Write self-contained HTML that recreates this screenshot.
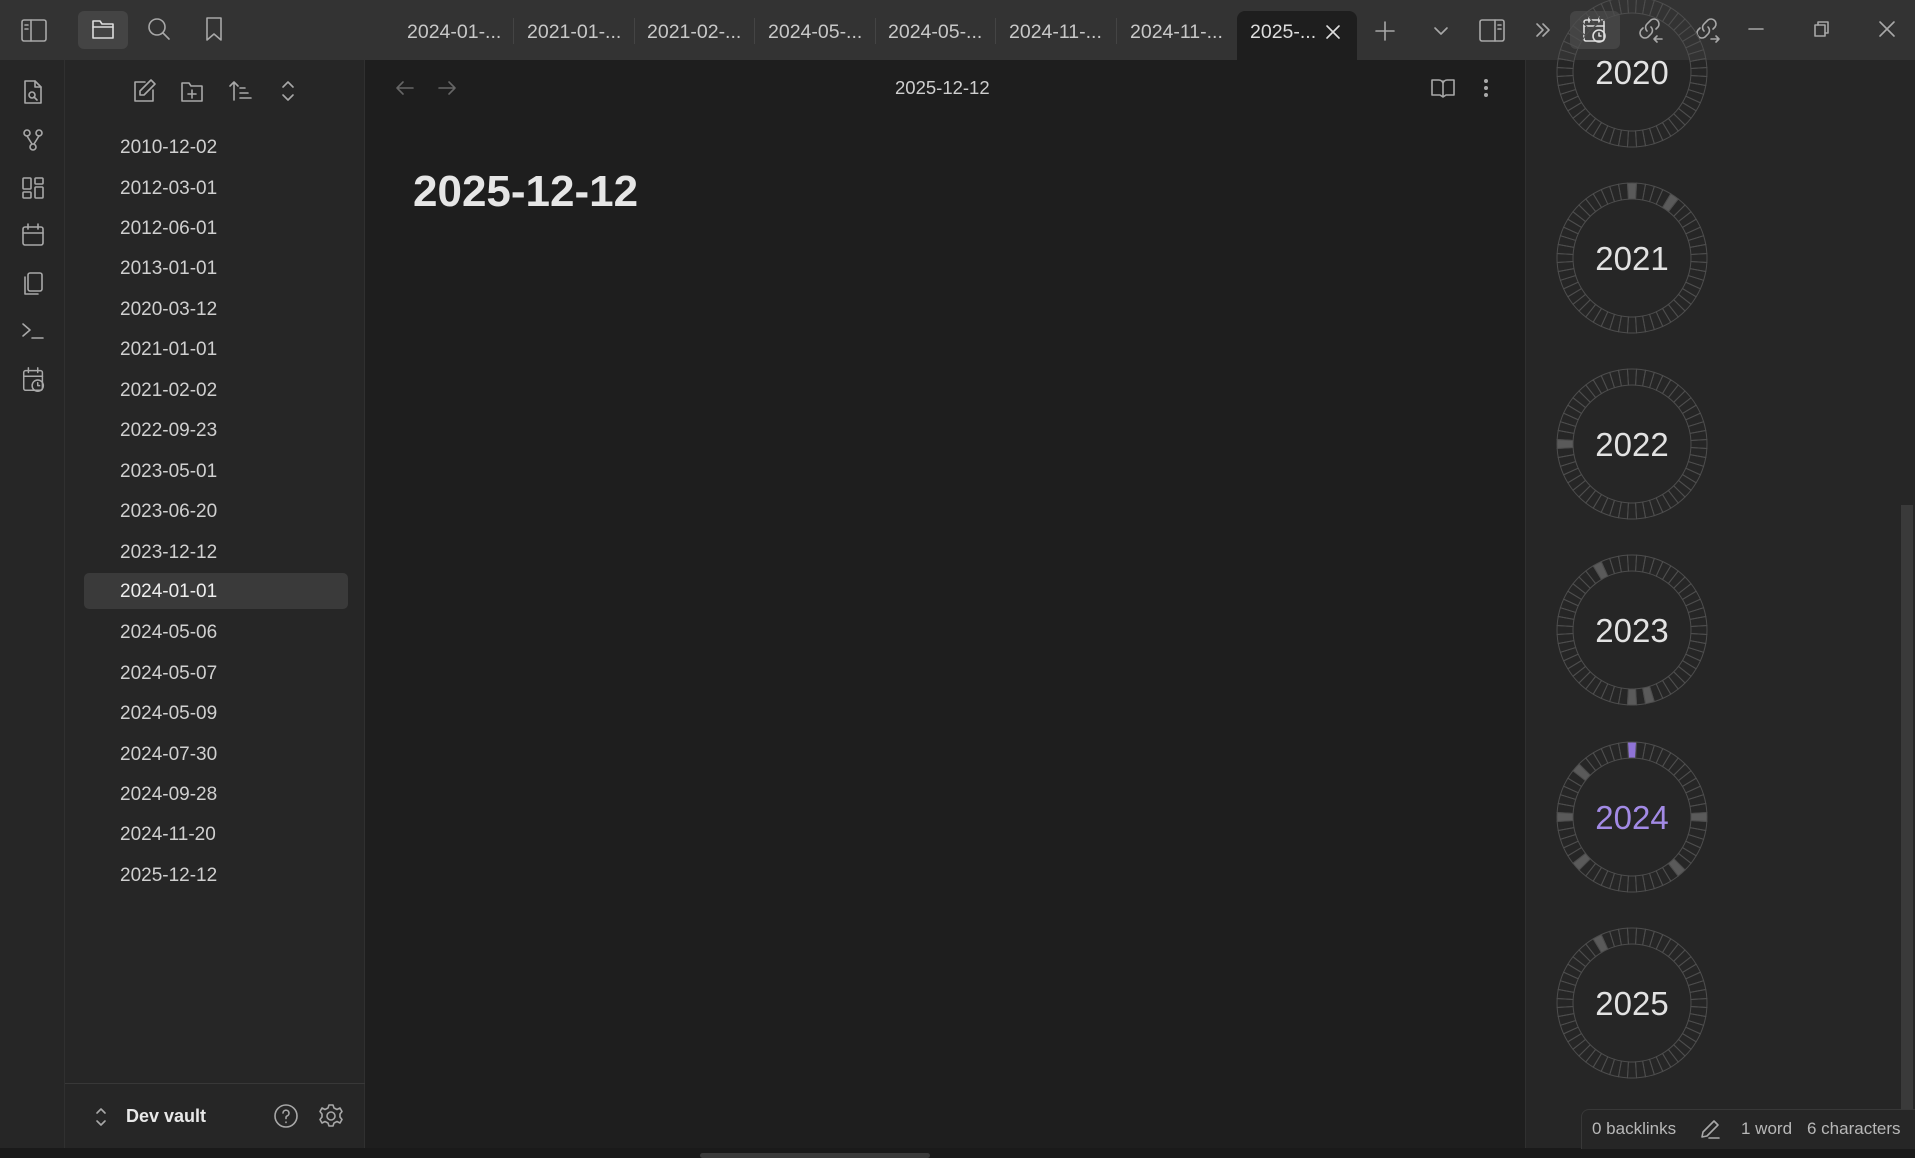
<!DOCTYPE html>
<html><head><meta charset="utf-8"><style>
*{box-sizing:border-box;margin:0;padding:0}
body{width:1915px;height:1158px;background:#1e1e1e;font-family:"Liberation Sans",sans-serif;color:#dadada;position:relative;overflow:hidden}
.top{position:absolute;left:0;top:0;width:1915px;height:60px;background:#333333}
.rib{position:absolute;left:0;top:60px;width:65px;height:1088px;background:#262626;border-right:1px solid #303030}
.side{position:absolute;left:65px;top:60px;width:300px;height:1088px;background:#262626;border-right:1px solid #303030}
.right{position:absolute;left:1525px;top:60px;width:390px;height:1088px;background:#262626;border-left:1px solid #303030}
.bot{position:absolute;left:0;top:1148px;width:1915px;height:10px;background:#1a1a1a}
.tab{position:absolute;top:21px;font-size:19.5px;color:#c8c8c8}
.sep{position:absolute;top:18px;width:1px;height:26px;background:#444}
.item{position:absolute;left:120px;font-size:19px;color:#d0d0d0}
svg.i{position:absolute;fill:none;stroke:#a8a8a8;stroke-width:1.6;stroke-linecap:round;stroke-linejoin:round}
.yr{position:absolute;left:1556px;width:152px;height:152px}
</style></head><body>
<div class="top"></div>
<div class="rib"></div>
<div class="side"></div>
<div class="right"></div>
<div style="position:absolute;left:1901px;top:505px;width:12px;height:640px;background:#3a3a3a"></div>
<div class="bot"></div>
<div style="position:absolute;left:700px;top:1153px;width:230px;height:5px;background:#3a3a3a;border-radius:3px"></div>

<div style="position:absolute;left:78px;top:11px;width:50px;height:38px;background:#444;border-radius:6px"></div>
<svg class="i" style="left:20px;top:18px" width="28" height="26" viewBox="0 0 28 26"><rect x="2" y="2" width="24" height="21" rx="2"/><line x1="11" y1="2" x2="11" y2="23"/><line x1="5" y1="7" x2="8" y2="7"/><line x1="5" y1="11" x2="8" y2="11"/></svg>
<svg class="i" style="left:90px;top:16px;stroke:#ddd" width="26" height="26" viewBox="0 0 26 26"><path d="M3 5h7l2 3h11v14H3z"/><line x1="3" y1="11" x2="23" y2="11"/></svg>
<svg class="i" style="left:146px;top:16px" width="26" height="26" viewBox="0 0 26 26"><circle cx="11" cy="11" r="8"/><line x1="17" y1="17" x2="23" y2="23"/></svg>
<svg class="i" style="left:202px;top:16px" width="24" height="26" viewBox="0 0 24 26"><path d="M5 2h14v22l-7-6-7 6z"/></svg>

<div style="position:absolute;left:1237px;top:11px;width:120px;height:50px;background:#1e1e1e;border-radius:8px 8px 0 0"></div>
<div class="tab" style="left:407px">2024-01-...</div><div class="sep" style="left:513px"></div>
<div class="tab" style="left:527px">2021-01-...</div><div class="sep" style="left:634px"></div>
<div class="tab" style="left:647px">2021-02-...</div><div class="sep" style="left:754px"></div>
<div class="tab" style="left:768px">2024-05-...</div><div class="sep" style="left:875px"></div>
<div class="tab" style="left:888px">2024-05-...</div><div class="sep" style="left:995px"></div>
<div class="tab" style="left:1009px">2024-11-...</div><div class="sep" style="left:1116px"></div>
<div class="tab" style="left:1130px">2024-11-...</div>
<div class="tab" style="left:1250px;color:#ddd">2025-...</div>
<svg class="i" style="left:1325px;top:24px;stroke:#ddd" width="16" height="16" viewBox="0 0 16 16"><path d="M2 2l12 12M14 2L2 14"/></svg>
<svg class="i" style="left:1374px;top:20px" width="22" height="22" viewBox="0 0 22 22"><path d="M11 2v18M2 11h18"/></svg>
<svg class="i" style="left:1432px;top:24px" width="18" height="14" viewBox="0 0 18 14"><path d="M3 4l6 6 6-6"/></svg>
<svg class="i" style="left:1478px;top:18px" width="28" height="26" viewBox="0 0 28 26"><rect x="2" y="2" width="24" height="21" rx="2"/><line x1="17" y1="2" x2="17" y2="23"/><line x1="20" y1="7" x2="23" y2="7"/><line x1="20" y1="11" x2="23" y2="11"/></svg>
<svg class="i" style="left:1533px;top:20px" width="20" height="20" viewBox="0 0 20 20"><path d="M4 4l6 6-6 6M10 4l6 6-6 6"/></svg>
<div style="position:absolute;left:1570px;top:11px;width:50px;height:38px;background:#444;border-radius:6px"></div>
<svg class="i" style="left:1581px;top:15px;stroke:#ddd" width="28" height="30" viewBox="0 0 28 30"><rect x="3" y="5" width="20" height="21" rx="2"/><line x1="3" y1="11" x2="23" y2="11"/><line x1="8" y1="2" x2="8" y2="7"/><line x1="18" y1="2" x2="18" y2="7"/><circle cx="18" cy="21" r="6"/><path d="M18 18v3h2"/></svg>
<svg class="i" style="left:1635px;top:15px" width="30" height="30" viewBox="0 0 30 30"><path d="M12 16a5 5 0 0 1 0-7l4-4a5 5 0 0 1 7 7l-2 2M16 12a5 5 0 0 1 0 7l-3 3a5 5 0 0 1-7-7l2-2"/><path d="M19 24h8M22 21l-3 3 3 3"/></svg>
<svg class="i" style="left:1692px;top:15px" width="30" height="30" viewBox="0 0 30 30"><path d="M12 16a5 5 0 0 1 0-7l4-4a5 5 0 0 1 7 7l-2 2M16 12a5 5 0 0 1 0 7l-3 3a5 5 0 0 1-7-7l2-2"/><path d="M19 24h8M24 21l3 3-3 3"/></svg>
<svg class="i" style="left:1747px;top:22px" width="18" height="14" viewBox="0 0 18 14"><line x1="2" y1="7" x2="16" y2="7"/></svg>
<svg class="i" style="left:1812px;top:19px" width="20" height="20" viewBox="0 0 20 20"><rect x="3" y="6" width="10" height="11"/><path d="M6 6V3h10v11h-3"/></svg>
<svg class="i" style="left:1878px;top:20px" width="18" height="18" viewBox="0 0 18 18"><path d="M2 2l14 14M16 2L2 16"/></svg>

<svg class="i" style="left:20px;top:78px" width="26" height="28" viewBox="0 0 26 28"><path d="M5 3h10l6 6v16H5z"/><path d="M15 3v6h6"/><circle cx="12" cy="17" r="3"/><line x1="14" y1="19" x2="17" y2="22"/></svg>
<svg class="i" style="left:20px;top:127px" width="26" height="26" viewBox="0 0 26 26"><circle cx="7" cy="6" r="3"/><circle cx="19" cy="6" r="3"/><circle cx="13" cy="20" r="3"/><path d="M7 9l5 8M19 9l-5 8"/></svg>
<svg class="i" style="left:20px;top:175px" width="26" height="26" viewBox="0 0 26 26"><rect x="3" y="3" width="8" height="11" rx="1"/><rect x="15" y="3" width="8" height="6" rx="1"/><rect x="3" y="17" width="8" height="6" rx="1"/><rect x="15" y="12" width="8" height="11" rx="1"/></svg>
<svg class="i" style="left:20px;top:222px" width="26" height="26" viewBox="0 0 26 26"><rect x="3" y="5" width="20" height="18" rx="2"/><line x1="3" y1="11" x2="23" y2="11"/><line x1="8" y1="2" x2="8" y2="7"/><line x1="18" y1="2" x2="18" y2="7"/></svg>
<svg class="i" style="left:20px;top:270px" width="26" height="28" viewBox="0 0 26 28"><rect x="8" y="3" width="14" height="18" rx="2"/><path d="M5 7v17h13"/></svg>
<svg class="i" style="left:20px;top:318px" width="26" height="26" viewBox="0 0 26 26"><path d="M3 6l7 6-7 6M12 20h11"/></svg>
<svg class="i" style="left:20px;top:366px" width="28" height="28" viewBox="0 0 28 30"><rect x="3" y="5" width="20" height="21" rx="2"/><line x1="3" y1="11" x2="23" y2="11"/><line x1="8" y1="2" x2="8" y2="7"/><line x1="18" y1="2" x2="18" y2="7"/><circle cx="18" cy="21" r="6"/><path d="M18 18v3h2"/></svg>

<svg class="i" style="left:131px;top:78px" width="26" height="26" viewBox="0 0 26 26"><path d="M14 4H4v19h18V12"/><path d="M20 2l4 4-11 11H9v-4z"/></svg>
<svg class="i" style="left:179px;top:78px" width="26" height="26" viewBox="0 0 26 26"><path d="M3 5h7l2 3h11v15H3z"/><path d="M13 12v8M9 16h8"/></svg>
<svg class="i" style="left:228px;top:78px" width="26" height="26" viewBox="0 0 26 26"><path d="M6 22V4M2 8l4-4 4 4M12 10h5M12 15h8M12 20h11"/></svg>
<svg class="i" style="left:277px;top:78px" width="22" height="26" viewBox="0 0 22 26"><path d="M6 9l5-5 5 5M6 17l5 5 5-5"/></svg>

<div style="position:absolute;left:84px;top:573px;width:264px;height:36px;background:#3a3a3a;border-radius:5px"></div>
<div class="item" style="top:137px">2010-12-02</div>
<div class="item" style="top:178px">2012-03-01</div>
<div class="item" style="top:218px">2012-06-01</div>
<div class="item" style="top:258px">2013-01-01</div>
<div class="item" style="top:299px">2020-03-12</div>
<div class="item" style="top:339px">2021-01-01</div>
<div class="item" style="top:380px">2021-02-02</div>
<div class="item" style="top:420px">2022-09-23</div>
<div class="item" style="top:461px">2023-05-01</div>
<div class="item" style="top:501px">2023-06-20</div>
<div class="item" style="top:542px">2023-12-12</div>
<div class="item" style="top:581px;color:#eee">2024-01-01</div>
<div class="item" style="top:622px">2024-05-06</div>
<div class="item" style="top:663px">2024-05-07</div>
<div class="item" style="top:703px">2024-05-09</div>
<div class="item" style="top:744px">2024-07-30</div>
<div class="item" style="top:784px">2024-09-28</div>
<div class="item" style="top:824px">2024-11-20</div>
<div class="item" style="top:865px">2025-12-12</div>

<div style="position:absolute;left:65px;top:1083px;width:300px;height:1px;background:#383838"></div>
<svg class="i" style="left:93px;top:1106px" width="16" height="22" viewBox="0 0 16 22"><path d="M4 7l4-4 4 4M4 15l4 4 4-4"/></svg>
<div style="position:absolute;left:126px;top:1106px;font-size:18px;font-weight:bold;color:#e8e8e8">Dev vault</div>
<svg class="i" style="left:273px;top:1103px" width="26" height="26" viewBox="0 0 26 26"><circle cx="13" cy="13" r="11"/><path d="M10 10a3 3 0 1 1 4 3c-1 .5-1 1-1 2.5M13 19v.5"/></svg>
<svg class="i" style="left:318px;top:1103px" width="26" height="26" viewBox="0 0 26 26"><circle cx="13" cy="13" r="4"/><path d="M11 2h4l1 3 3 1.5 3-1.5 2 3.5-2 2.5v3l2 2.5-2 3.5-3-1.5-3 1.5-1 3h-4l-1-3-3-1.5-3 1.5-2-3.5 2-2.5v-3l-2-2.5 2-3.5 3 1.5 3-1.5z"/></svg>

<svg class="i" style="left:394px;top:78px;stroke:#666" width="22" height="20" viewBox="0 0 22 20"><path d="M19 10H3M9 4l-6 6 6 6"/></svg>
<svg class="i" style="left:436px;top:78px;stroke:#666" width="22" height="20" viewBox="0 0 22 20"><path d="M3 10h16M13 4l6 6-6 6"/></svg>
<div style="position:absolute;left:895px;top:77px;font-size:18.5px;color:#cfcfcf">2025-12-12</div>
<svg class="i" style="left:1430px;top:76px" width="26" height="24" viewBox="0 0 26 24"><path d="M13 5v16M2 4h7a4 4 0 0 1 4 4 4 4 0 0 1 4-4h7v15h-8l-3 2-3-2H2z"/></svg>
<div style="position:absolute;left:1484px;top:79px;width:4px;height:4px;border-radius:2px;background:#aaa;box-shadow:0 7px 0 #aaa,0 14px 0 #aaa"></div>
<div style="position:absolute;left:413px;top:167px;font-size:44px;font-weight:bold;color:#e6e6e6">2025-12-12</div>

<div id="rings"></div>

<div style="position:absolute;left:1581px;top:1109px;width:334px;height:40px;background:#262626;border:1px solid #383838;border-right:none;border-bottom:none;border-radius:8px 0 0 0"></div>
<div style="position:absolute;left:1592px;top:1119px;font-size:17px;color:#b8b8b8">0 backlinks</div>
<svg class="i" style="left:1698px;top:1117px" width="24" height="24" viewBox="0 0 24 24"><path d="M4 20l1-5L16 4l4 4L9 19zM11 21h10"/></svg>
<div style="position:absolute;left:1741px;top:1119px;font-size:17px;color:#b8b8b8">1 word</div>
<div style="position:absolute;left:1807px;top:1119px;font-size:17px;color:#b8b8b8">6 characters</div>

<script>
var years=[[2020,72,[]],[2021,258,[0,5]],[2022,444,[39]],[2023,630,[48,24,26]],[2024,817,[0,45,39,20,33,13]],[2025,1003,[48]]];
var N=52,h='';
years.forEach(function(y){
 var cx=76,cy=76,R=75,r=59,s='<svg class="yr" style="top:'+(y[1]-76)+'px" viewBox="0 0 152 152">';
 for(var k=0;k<N;k++){
  var a0=(k-0.5)/N*2*Math.PI-Math.PI/2,a1=(k+0.5)/N*2*Math.PI-Math.PI/2;
  var p=function(rad,a){return (cx+rad*Math.cos(a)).toFixed(2)+' '+(cy+rad*Math.sin(a)).toFixed(2)};
  var f='none';
  if(y[2].indexOf(k)>=0) f=(y[0]==2024&&k==0)?'#8f73d6':'#5a5a5a';
  s+='<path d="M'+p(r,a0)+'L'+p(R,a0)+'A'+R+' '+R+' 0 0 1 '+p(R,a1)+'L'+p(r,a1)+'A'+r+' '+r+' 0 0 0 '+p(r,a0)+'Z" fill="'+f+'" stroke="#4d4d4d" stroke-width="1"/>';
 }
 s+='<text x="76" y="88" text-anchor="middle" font-family="Liberation Sans,sans-serif" font-size="33" fill="'+(y[0]==2024?'#a28ae5':'#e2e2e2')+'">'+y[0]+'</text></svg>';
 h+=s;
});
document.getElementById('rings').innerHTML=h;
</script>
</body></html>
